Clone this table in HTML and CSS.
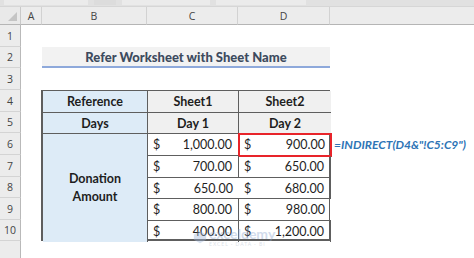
FILE: index.html
```html
<!DOCTYPE html>
<html>
<head>
<meta charset="utf-8">
<link rel="stylesheet" href="styles.css">
</head>
<body>
<div class="topbar">
  <div class="tb-seg tb-a"></div><div class="tb-seg tb-b"></div><div class="tb-seg tb-c"></div><div class="tb-seg tb-d"></div>
</div>
<div class="sheet">
  <div class="corner"><span class="tri"></span></div>
  <div class="colhead">A</div>
  <div class="colhead">B</div>
  <div class="colhead">C</div>
  <div class="colhead">D</div>
  <div class="colhead last"></div>

  <div class="rowhead r1">1</div>
  <div class="rowhead r2">2</div>
  <div class="rowhead r3">3</div>
  <div class="rowhead r4">4</div>
  <div class="rowhead r5">5</div>
  <div class="rowhead r6">6</div>
  <div class="rowhead r7">7</div>
  <div class="rowhead r8">8</div>
  <div class="rowhead r9">9</div>
  <div class="rowhead r10">10</div>
  <div class="rowhead r11"></div>

  <div class="title">Refer Worksheet with Sheet Name</div>

  <div class="table">
    <div class="c lbl">Reference</div>
    <div class="c hd">Sheet1</div>
    <div class="c hd">Sheet2</div>
    <div class="c lbl">Days</div>
    <div class="c hd">Day 1</div>
    <div class="c hd">Day 2</div>
    <div class="c lbl merged">Donation<br>Amount</div>
    <div class="c num"><span>$</span><span>1,000.00</span></div>
    <div class="c num sel"><span>$</span><span>900.00</span></div>
    <div class="c num"><span>$</span><span>700.00</span></div>
    <div class="c num"><span>$</span><span>650.00</span></div>
    <div class="c num"><span>$</span><span>650.00</span></div>
    <div class="c num"><span>$</span><span>680.00</span></div>
    <div class="c num"><span>$</span><span>800.00</span></div>
    <div class="c num"><span>$</span><span>980.00</span></div>
    <div class="c num lastrow"><span>$</span><span>400.00</span></div>
    <div class="c num lastrow"><span>$</span><span>1,200.00</span></div>
  </div>

  <div class="formula">=INDIRECT(D4&amp;"!C5:C9")</div>
</div>
<div class="watermark">
  <svg class="wm-icon" width="14" height="14" viewBox="0 0 16 16"><path d="M8 1 L15 5 L15 11 L8 15 L1 11 L1 5 Z" fill="#9fb6d9"/></svg>
  <div class="wm-text"><span class="wm-big">exceldemy</span><span class="wm-small">EXCEL · DATA · BI</span></div>
</div>
</body>
</html>
```
FILE: styles.css
```css
* { box-sizing: border-box; }
html, body { margin: 0; padding: 0; }
body {
  width: 474px;
  height: 258px;
  overflow: hidden;
  background: #ffffff;
  font-family: Lato, "Open Sans", sans-serif;
  position: relative;
}
.topbar {
  height: 7px;
  background: #e1e1e1;
  display: flex;
  gap: 6px;
  padding-left: 4px;
  border-bottom: 1px solid #d6d6d6;
}
.tb-seg { height: 5px; background: #ebebeb; }
.tb-a { width: 84px; }
.tb-b { width: 22px; background: #dcdcdc; }
.tb-c { width: 88px; }
.tb-d { width: 90px; }

.sheet {
  display: grid;
  grid-template-columns: 21px 21px 105px 91px 92px 144px;
  grid-template-rows: 18px 22px 21px 22px 22px 21px 22px 22px 21px 22px 21px 17px;
}
.corner {
  background: #e9e9e9;
  border-right: 1px solid #c9c9c9;
  border-bottom: 1px solid #b5b5b5;
  display: flex;
  align-items: flex-end;
  justify-content: flex-end;
  padding: 0 3px 3px 0;
}
.tri {
  width: 0; height: 0;
  border-left: 9px solid transparent;
  border-bottom: 9px solid #c4c4c4;
}
.colhead {
  background: #ececec;
  border-right: 1px solid #d2d2d2;
  border-bottom: 1px solid #b5b5b5;
  color: #444;
  font-family: "Open Sans", sans-serif;
  font-size: 10.5px;
  display: flex;
  align-items: center;
  justify-content: center;
}
.colhead.last { border-right: none; }
.rowhead {
  grid-column: 1;
  background: #ececec;
  border-right: 1px solid #b9b9b9;
  border-bottom: 1px solid #d4d4d4;
  color: #444;
  font-family: "Open Sans", sans-serif;
  font-size: 10.5px;
  display: flex;
  align-items: center;
  justify-content: center;
}
.r1 { grid-row: 2; } .r2 { grid-row: 3; } .r3 { grid-row: 4; } .r4 { grid-row: 5; }
.r5 { grid-row: 6; } .r6 { grid-row: 7; } .r7 { grid-row: 8; } .r8 { grid-row: 9; }
.r9 { grid-row: 10; } .r10 { grid-row: 11; } .r11 { grid-row: 12; border-bottom: none; }

.title {
  grid-column: 3 / 6;
  grid-row: 3;
  background: #f2f2f2;
  border-bottom: 2px solid #8ea9db;
  color: #3d4b5e;
  font-weight: 900;
  font-size: 13px;
  display: flex;
  align-items: center;
  justify-content: center;
  padding-top: 1px;
}

.table {
  grid-column: 3 / 6;
  grid-row: 5 / 12;
  display: grid;
  grid-template-columns: 105px 91px 92px;
  grid-template-rows: 22px 21px 22px 22px 21px 22px 21px;
  border: 1px solid #5e5e5e;
  border-bottom-width: 2px;
  border-left-width: 2px;
  margin-left: -1px;
}
.c {
  border-right: 1px solid #5e5e5e;
  border-bottom: 1px solid #5e5e5e;
  font-size: 12.5px;
  color: #1e1e1e;
  display: flex;
  align-items: center;
}
.c:nth-child(3n) { border-right: none; }
.lbl {
  background: #ddebf7;
  font-weight: 700;
  justify-content: center;
}
.hd {
  background: #f0f0f0;
  font-weight: 700;
  justify-content: center;
}
.merged {
  grid-row: 3 / 8;
  text-align: center;
  line-height: 18px;
  border-bottom: none;
}
.num {
  justify-content: space-between;
  padding: 0 6px 0 5px;
}
.lastrow { border-bottom: none; }
.sel {
  outline: 2px solid #e8242a;
  outline-offset: -1px;
}
.formula {
  grid-column: 6;
  grid-row: 7;
  color: #2e75b6;
  font-style: italic;
  font-weight: 700;
  font-size: 12px;
  display: flex;
  align-items: center;
  padding-left: 4px;
  white-space: nowrap;
}
.watermark {
  position: absolute;
  left: 193px;
  top: 227px;
  display: flex;
  align-items: center;
  gap: 2px;
  opacity: 0.4;
}
.wm-text { display: flex; flex-direction: column; line-height: 1; }
.wm-big { color: #8fa8d0; font-size: 14px; font-weight: 700; }
.wm-small { color: #a9b4c4; font-size: 5px; letter-spacing: 1px; margin-top: 1px; }
```
